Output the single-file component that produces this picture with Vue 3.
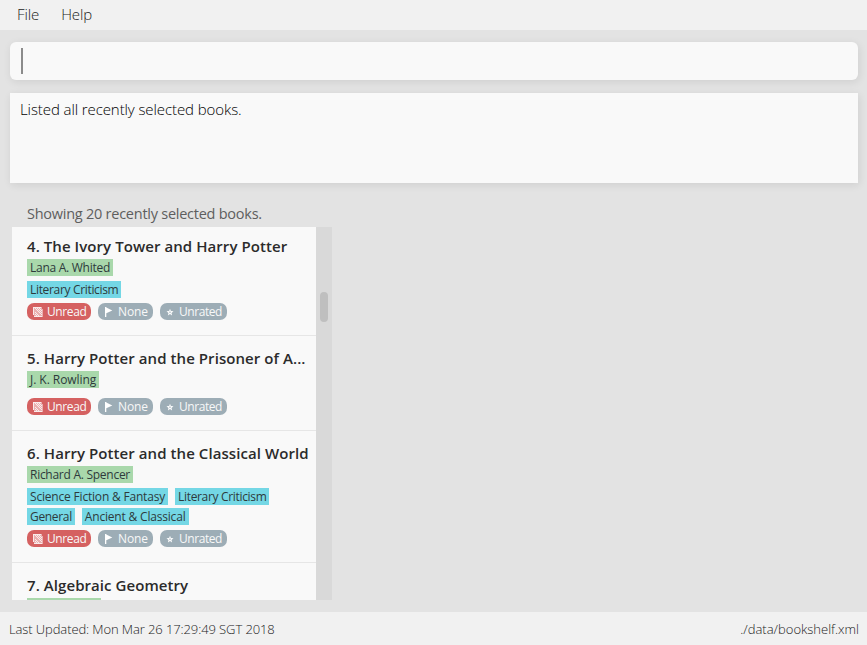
<script setup>
const books = [
  { id: 4, title: 'The Ivory Tower and Harry Potter', authors: [{ name: 'Lana A. Whited' }], categories: [{ name: 'Literary Criticism', fit: 'tight' }] },
  { id: 5, title: 'Harry Potter and the Prisoner of A...', authors: [{ name: 'J. K. Rowling', fit: 'loose' }], categories: [] },
  {
    id: 6,
    title: 'Harry Potter and the Classical World',
    authors: [{ name: 'Richard A. Spencer' }],
    categories: [
      { name: 'Science Fiction & Fantasy', fit: 'relaxed' },
      { name: 'Literary Criticism', fit: 'tight' },
      { name: 'General', fit: 'tight' },
      { name: 'Ancient & Classical', fit: 'relaxed' },
    ],
  },
  { id: 7, title: 'Algebraic Geometry', clipped: true },
]
</script>

<template>
  <div class="window">
    <nav class="menu"><span>File</span><span>Help</span></nav>
    <div class="command"><span class="caret"></span></div>
    <div class="result">Listed all recently selected books.</div>
    <section class="panel">
      <div class="status-label">Showing 20 recently selected books.</div>
      <div class="list">
        <div class="items">
          <article v-for="b in books" :key="b.id" class="book">
            <h2>{{ b.id }}. {{ b.title }}</h2>
            <div v-if="b.clipped" class="tags"><span class="tag author placeholder"></span></div>
            <template v-else>
              <div class="tags">
                <span v-for="a in b.authors" :key="a.name" class="tag author" :class="a.fit">{{ a.name }}</span>
              </div>
              <div class="tags categories">
                <span v-for="c in b.categories" :key="c.name" class="tag" :class="c.fit">{{ c.name }}</span>
              </div>
              <div class="badges">
                <span class="badge unread">
                  <svg width="10" height="10" viewBox="0 0 10 10" shape-rendering="crispEdges">
                    <path fill="#fff" fill-opacity=".5" d="M0 0h9v2h1v8H1V8H0z" />
                    <path fill="#fff" fill-opacity=".75" d="M0 0h8v1H0zM0 1h1v7H0zM2 1h1v1H2zM4 1h1v1H4zM6 1h1v1H6zM3 2h1v1H3zM5 2h1v1H5zM7 2h1v1H7zM4 3h1v1H4zM6 3h1v1H6zM8 3h1v1H8zM5 4h1v1H5zM7 4h1v1H7zM6 5h1v1H6zM8 5h1v1H8zM2 5h1v1H2zM3 6h1v1H3zM7 6h1v1H7zM2 7h1v1H2zM4 7h1v1H4zM8 7h1v1H8zM3 8h1v1H3zM5 8h1v1H5zM1 9h8v1H1z" />
                  </svg>Unread
                </span>
                <span class="badge none">
                  <svg width="9" height="10" viewBox="0 0 9 10"><path fill="#fff" d="M1 0h1.3v.6L8.3 3.5 2.3 6.2V10H1z" /></svg>None
                </span>
                <span class="badge unrated">
                  <svg width="8" height="10" viewBox="0 0 8 10"><path fill="#fff" fill-rule="evenodd" d="M4 1.7 4.9 4.1 7.5 4.2 5.5 5.9 6.1 8.4 4 7.1 1.9 8.4 2.5 5.9 .5 4.2 3.1 4.1zM4 4.2 3.3 5.1 3.7 6.3 4 6.1 4.3 6.3 4.7 5.1z" /></svg>Unrated
                </span>
              </div>
            </template>
          </article>
        </div>
        <div class="scrollbar"><div class="thumb"></div></div>
      </div>
    </section>
    <footer class="footer"><span class="updated">Last Updated: Mon Mar 26 17:29:49 SGT 2018</span><span class="path">./data/bookshelf.xml</span></footer>
  </div>
</template>

<style>
body { margin: 0; overflow: hidden; }
</style>

<style scoped>
.window {
  display: flex;
  flex-direction: column;
  width: 867px;
  height: 645px;
  overflow: hidden;
  background: #e3e3e3;
  font-family: "Open Sans", "Noto Sans", sans-serif;
  white-space: nowrap;
}
.menu {
  display: flex;
  gap: 22px;
  height: 30px;
  padding-left: 17px;
  box-sizing: border-box;
  background: #f1f1f1;
  color: #1c1c1c;
  font-size: 15px;
  font-weight: 300;
  letter-spacing: -0.1px;
  line-height: 29px;
}
.command {
  height: 38px;
  margin: 12px 9px 0 10px;
  padding: 6px 11px;
  box-sizing: border-box;
  border-radius: 6px;
  background: #f9f9f9;
  box-shadow: 1px 2px 8px rgba(0, 0, 0, 0.09);
}
.caret { display: block; width: 2px; height: 26px; background: #8b8b8b; }
.result {
  height: 90px;
  margin: 13px 9px 0 10px;
  padding: 6px 10px;
  box-sizing: border-box;
  background: #f9f9f9;
  box-shadow: 1px 2px 8px rgba(0, 0, 0, 0.09);
  color: #000;
  font-size: 15px;
  font-weight: 300;
  letter-spacing: -0.09px;
  line-height: 20px;
}
.panel { width: 320px; margin: 21px 0 0 12px; }
.status-label {
  height: 23px;
  padding-left: 15px;
  color: #5e5e5e;
  font-size: 14.5px;
  letter-spacing: -0.25px;
  line-height: 20px;
}
.list { display: flex; height: 373px; }
.items { width: 304px; height: 373px; overflow: hidden; background: #f9f9f9; }
.book {
  padding: 11px 0 15px 15px;
  border-bottom: 1px solid #e6e6e6;
}
.book:first-child { margin-top: -3px; }
h2 {
  height: 24px;
  margin: 0;
  color: #2b2b2b;
  font-size: 15px;
  font-weight: 600;
  letter-spacing: 0.07px;
  line-height: 22px;
}
.tags { display: flex; flex-wrap: wrap; gap: 3px 7px; margin-bottom: 5px; }
.tag {
  height: 17px;
  padding: 0 3px;
  background: #74d7e5;
  color: #2e3a3c;
  font-size: 12px;
  letter-spacing: -0.27px;
  line-height: 17px;
}
.tight { letter-spacing: -0.33px; }
.relaxed { letter-spacing: -0.19px; }
.loose { letter-spacing: -0.05px; }
.author { background: #a9d8ab; }
.placeholder { width: 68px; }
.badges { display: flex; gap: 7px; }
.badge {
  display: flex;
  align-items: center;
  height: 17px;
  box-sizing: border-box;
  padding-left: 6px;
  border-radius: 7px;
  background: #9dadb6;
  color: #f8f8f8;
  font-size: 12px;
  letter-spacing: -0.4px;
  line-height: 17px;
}
.unread { width: 64px; gap: 4px; background: #d56161; }
.none { width: 55px; gap: 5px; letter-spacing: -0.1px; }
.unrated { width: 67px; gap: 5px; letter-spacing: -0.5px; }
.unrated { letter-spacing: -0.45px; }
.scrollbar { width: 16px; box-sizing: border-box; padding: 65px 4px 0; background: #d9d9d9; }
.thumb { height: 30px; border-radius: 4px; background: #bfbfbf; }
.footer {
  display: flex;
  justify-content: space-between;
  height: 33px;
  margin-top: 12px;
  padding: 0 8px 0 9px;
  background: #f1f1f1;
  color: #222;
  font-size: 13px;
  font-weight: 300;
  line-height: 34px;
}
.updated { letter-spacing: -0.1px; }
</style>
